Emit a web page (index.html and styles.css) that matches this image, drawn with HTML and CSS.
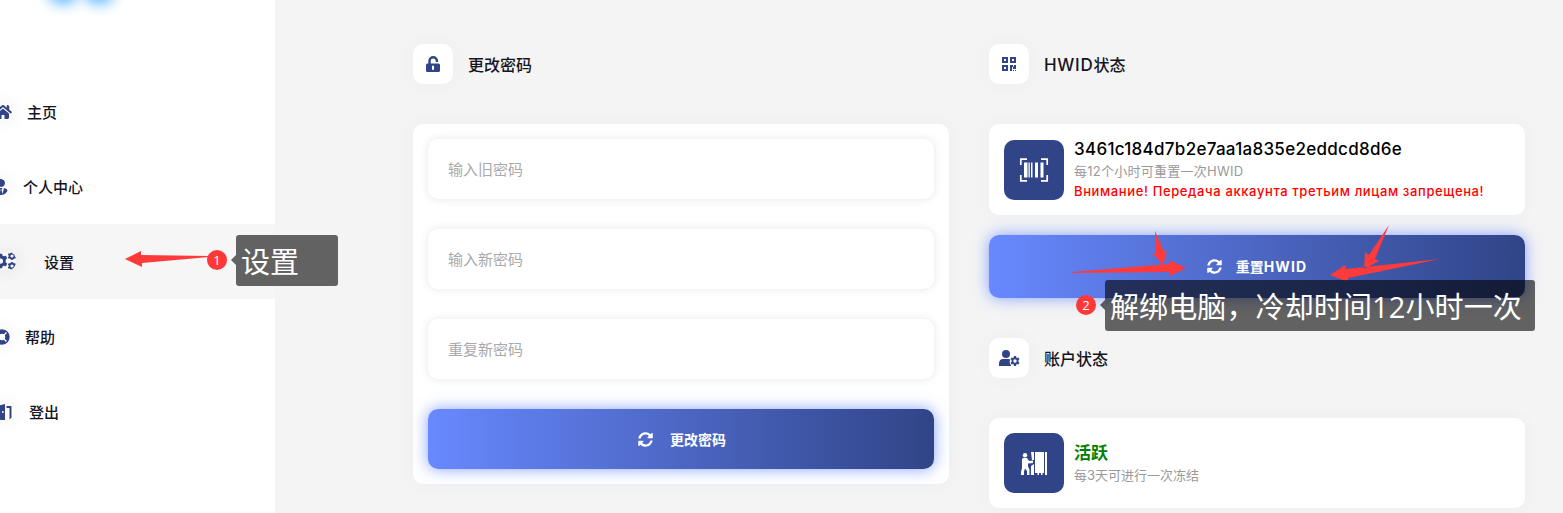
FILE: index.html
```html
<!DOCTYPE html>
<html lang="zh-CN">
<head>
<meta charset="utf-8">
<title>设置</title>
<link rel="stylesheet" href="styles.css">
</head>
<body>
<svg class="defs" aria-hidden="true">
  <symbol id="sync" viewBox="0 0 512 512"><path d="M370.72 133.28C339.458 104.008 298.888 87.962 255.848 88c-77.458.068-144.328 53.178-162.791 126.85-1.344 5.363-6.122 9.15-11.651 9.15H24.103c-7.498 0-13.194-6.807-11.807-14.176C33.933 94.924 134.813 8 256 8c66.448 0 126.791 26.136 171.315 68.685L463.03 40.97C478.149 25.851 504 36.559 504 57.941V192c0 13.255-10.745 24-24 24H345.941c-21.382 0-32.09-25.851-16.971-40.971l41.75-41.749zM32 296h134.059c21.382 0 32.09 25.851 16.971 40.971l-41.75 41.75c31.262 29.273 71.835 45.319 114.876 45.28 77.418-.07 144.315-53.144 162.787-126.849 1.344-5.363 6.122-9.15 11.651-9.15h57.304c7.498 0 13.194 6.807 11.807 14.176C478.067 417.076 377.187 504 256 504c-66.448 0-126.791-26.136-171.315-68.685L48.97 471.03C33.851 486.149 8 475.441 8 454.059V320c0-13.255 10.745-24 24-24z"/></symbol>
  <symbol id="gear" viewBox="0 0 20 20"><path fill-rule="evenodd" d="M8 0h4l.6 2.800 1.700 1 2.700-.9 2 3.400-2.100 1.900v3.600l2.100 1.900-2 3.400-2.700-.9-1.700 1L12 20H8l-.6-2.800-1.700-1-2.700.9-2-3.400 2.100-1.900V8.200L1 6.300l2-3.400 2.700.9 1.700-1zM10 6.500a3.500 3.500 0 1 0 0 7 3.500 3.500 0 0 0 0-7z"/></symbol>
</svg>
<div class="page">
  <nav class="sidebar">
    <div class="logo"><i></i><i></i></div>
    <a class="item"><svg class="icon" width="18" height="16" viewBox="0 0 576 512"><path d="M280.37 148.26L96 300.11V464a16 16 0 0 0 16 16l112.06-.29a16 16 0 0 0 15.92-16V368a16 16 0 0 1 16-16h64a16 16 0 0 1 16 16v95.64a16 16 0 0 0 16 16.05L464 480a16 16 0 0 0 16-16V300L295.67 148.26a12.19 12.19 0 0 0-15.3 0zM571.6 251.47L488 182.56V44.05a12 12 0 0 0-12-12h-56a12 12 0 0 0-12 12v72.61L318.47 43a48 48 0 0 0-61 0L4.340 251.470a12 12 0 0 0-1.600 16.900l25.500 31A12 12 0 0 0 45.150 301l235.220-193.740a12.190 12.190 0 0 1 15.300 0L530.900 301a12 12 0 0 0 16.900-1.600l25.500-31a12 12 0 0 0-1.700-16.930z"/></svg><span>主页</span></a>
    <a class="item"><svg class="icon" width="14" height="16" viewBox="0 0 448 512"><path d="M224 256c70.7 0 128-57.3 128-128S294.700 0 224 0 96 57.300 96 128s57.300 128 128 128zm95.800 32.600L272 480l-32-136 32-56h-96l32 56-32 136-47.800-191.400C56.900 292 0 350.300 0 422.400V464c0 26.500 21.500 48 48 48h352c26.500 0 48-21.500 48-48v-41.600c0-72.100-56.900-130.400-128.200-133.800z"/></svg><span>个人中心</span></a>
    <a class="item active"><svg class="icon" width="22" height="18" viewBox="0 0 22 18"><use href="#gear" x="-1" y="1.500" width="15" height="15"/><g fill="none" stroke="#304487"><circle cx="18" cy="4" r="2.500" stroke-width="1.800"/><circle cx="18" cy="14" r="2.500" stroke-width="1.800"/><path stroke-width="1.500" d="M18 0v1.500M18 6.500V8M14.200 2l1.500.8M20.300 5.200l1.500.8M21.800 2l-1.500.8M15.700 5.200l-1.500.8M18 10v1.500M18 16.500V18M14.200 12l1.500.8M20.300 15.200l1.500.8M21.800 12l-1.500.8M15.700 15.200l-1.500.8"/></g></svg><span>设置</span></a>
    <a class="item"><svg class="icon" width="16" height="16" viewBox="0 0 16 16"><circle cx="8" cy="8" r="5.500" fill="none" stroke="#304487" stroke-width="4.600"/><path d="M3.500 3.500l2.500 2.500M12.500 3.500l-2.500 2.500M3.500 12.500l2.500-2.500M12.500 12.500l-2.500-2.500" stroke="#fff" stroke-width="1.400"/></svg><span>帮助</span></a>
    <a class="item"><svg class="icon" width="20" height="16" viewBox="0 0 20 16"><path fill-rule="evenodd" d="M3 2l8-2v16H0v-2h3zM8.200 7v2h1.300V7zM12.500 2h5v12H20v2h-4.500V4h-3z"/></svg><span>登出</span></a>
  </nav>
  <main class="content">
    <section class="column">
      <header class="heading"><div class="badge"><svg width="14" height="16" viewBox="0 0 14 16"><path d="M3.500 8V4.800a3.700 3.600 0 0 1 7.400 0V6" fill="none" stroke="#304487" stroke-width="2.400"/><path fill-rule="evenodd" d="M1.500 7.500h11Q14 7.500 14 9v5.500q0 1.500-1.500 1.500h-11Q0 16 0 14.500V9Q0 7.500 1.500 7.500zM6 9.800v4h2v-4z"/></svg></div><h2>更改密码</h2></header>
      <form class="card form">
        <input placeholder="输入旧密码"><input placeholder="输入新密码"><input placeholder="重复新密码">
        <button class="button" type="button"><svg width="15" height="15"><use href="#sync"/></svg><span>更改密码</span></button>
      </form>
    </section>
    <section class="column">
      <header class="heading"><div class="badge"><svg width="14" height="14" viewBox="0 0 14 14"><path fill-rule="evenodd" d="M0 0h6v6H0zM2 2v2h2V2zM8 0h6v6H8zM10 2v2h2V2zM0 8h6v6H0zM2 10v2h2v-2zM8 8h3v1.500h1V8h2v4h-3v-2h-1v4H8zM11 13h1v1h-1zM13 13h1v1h-1z"/></svg></div><h2><span class="latin">HWID</span>状态</h2></header>
      <div class="card info hwid"><div class="tile"><svg width="30" height="24" viewBox="0 0 30 24"><path d="M1.800 7V1.200H8M22 1.200h6.200V7M1.800 17v5.800H8M22 22.800h6.200V17" fill="none" stroke="#fff" stroke-width="1.700"/><path d="M5 4.500h3.500v15H5zM9.500 4.500h1.300v15H9.500zM12 4.500h1.500v15H12zM16 4.500h3v15h-3zM21.500 4.500h3v15h-3z"/></svg></div><div class="details"><strong class="id">3461c184d7b2e7aa1a835e2eddcd8d6e</strong><small class="cooldown">每12个小时可重置一次HWID</small><small class="warn">Внимание! Передача аккаунта третьим лицам запрещена!</small></div></div>
      <button class="button reset" type="button"><svg width="15" height="15"><use href="#sync"/></svg><span>重置<span class="latin">HWID</span></span></button>
      <header class="heading"><div class="badge"><svg width="21" height="16" viewBox="0 0 21 16"><circle cx="7" cy="4" r="4"/><path d="M0 16v-2.200Q0 9 4.200 9h5.600l1.500.5Q9.700 12 12 15.200V16z"/><use href="#gear" x="11" y="6" width="10" height="10"/></svg></div><h2>账户状态</h2></header>
      <div class="card info"><div class="tile"><svg width="26" height="23" viewBox="0 0 26 23"><circle cx="4" cy="3.200" r="2.200"/><path d="M2 6h4l2 3 4-.5V11l-5 .5v3l1.500 3V23H6v-4l-2-2.500-1 3V23H0v-3l1-4V7zM10 0h3v8h-2zM10 14l3-2v11h-3zM14 0h9v21h-1.500v2H20v-2h-2v2h-1.500v-2H14zM24 0h2v23h-2z"/></svg></div><div class="details"><strong class="status">活跃</strong><small>每3天可进行一次冻结</small></div></div>
    </section>
  </main>
</div>
<svg class="arrows" width="1563" height="513" viewBox="0 0 1563 513"><path d="M125 259l16-8v4l68 1v1l-67 6v4zM1072 272l97-8v-4l17 8-16 8v-4l-98 1zM1155 231l9 21 3-1-4 14-10-11 3-1zM1389 225l-20 30-4-3-1 17 15-8-4-2zM1330 275l15-10 1 4 94-10-92 19v4z"/></svg>
<div class="step one">1</div><div class="note note-one">设置</div>
<div class="step two">2</div><div class="note note-two">解绑电脑，冷却时间12小时一次</div>
</body>
</html>
```
FILE: styles.css
```css
* { box-sizing: border-box; }
body { margin: 0; overflow: hidden; background: #f4f4f4; color: #15151f; font-family: Inter, "Noto Sans CJK SC", sans-serif; }
.defs { position: absolute; width: 0; height: 0; }
svg { flex: none; fill: #304487; }
.page { display: flex; width: 1563px; height: 513px; }
.sidebar { width: 275px; flex: none; background: #fff; overflow: hidden; }
.logo { height: 74px; display: flex; gap: 14px; padding-left: 52px; }
.logo i { width: 22px; height: 16px; margin-top: -19px; border-radius: 50%; box-shadow: 0 3px 14px 4px #5cb6ff; }
.item { height: 75px; margin-left: -6px; display: flex; align-items: center; gap: 15px; font-size: 15px; font-weight: 500; }
.item.active { background: #f6f6f6; gap: 28px; }
.item.active .icon { margin-top: -2px; }
.icon { border-radius: 8px; box-shadow: 0 0 16px 3px rgba(0,0,0,.05); }
.content { display: flex; gap: 40px; padding: 44px 38px 0 138px; align-items: flex-start; }
.column { width: 536px; }
.heading { display: flex; align-items: center; gap: 15px; height: 40px; margin-bottom: 40px; }
.badge { width: 40px; height: 40px; display: flex; align-items: center; justify-content: center; border-radius: 10px; background: #fff; box-shadow: 0 0 20px rgba(0,0,0,.03); }
h2 { margin: 1px 0 0; font-size: 16px; font-weight: 500; line-height: 24px; }
.latin { letter-spacing: .5px; }
h2 .latin { font-size: 17px; letter-spacing: .7px; }
.card { background: #fff; border-radius: 10px; padding: 15px; box-shadow: 0 0 20px rgba(0,0,0,.03); }
.form { display: flex; flex-direction: column; gap: 30px; }
input { height: 60px; border: 0; border-radius: 10px; padding: 0 20px 2px; background: #fff; box-shadow: 0 0 10px rgba(0,0,0,.1); font: 400 15px "Noto Sans CJK SC", sans-serif; }
input::placeholder { color: #aaa; }
.button { display: flex; align-items: center; justify-content: center; gap: 17px; width: 100%; height: 60px; padding: 0 0 0 2px; border: 0; border-radius: 10px; background: linear-gradient(90deg, #6889ff, #304487); box-shadow: 0 0 15px rgba(104,137,255,.8); color: #fff; font: 700 14px Inter, "Noto Sans CJK SC", sans-serif; }
.button svg, .tile svg { fill: #fff; }
.reset { height: 63px; margin: 20px 0 40px; padding: 0 0 1px; gap: 14px; }
.reset .latin { letter-spacing: 1.1px; }
.info { display: flex; align-items: center; gap: 10px; height: 90px; }
.hwid { height: 91px; }
.tile { width: 60px; height: 60px; flex: none; display: flex; align-items: center; justify-content: center; border-radius: 10px; background: #304487; }
.details { display: flex; flex-direction: column; white-space: nowrap; }
strong { font-size: 17px; line-height: 24px; }
.id { color: #000; font-weight: 500; letter-spacing: .29px; line-height: 21px; }
.status { color: #008000; font-weight: 700; }
small { color: #999; font-size: 13px; line-height: 21px; }
.cooldown { line-height: 22px; letter-spacing: .25px; }
.warn { color: red; line-height: 18px; font-weight: 500; letter-spacing: .62px; }
.arrows { position: absolute; left: 0; top: 0; fill: #ff3a3a; }
.step { position: absolute; width: 20px; height: 20px; border-radius: 50%; background: #ff3838; color: #fff; font: 13px/20px "Open Sans", sans-serif; text-align: center; }
.one { left: 207px; top: 250px; }
.two { left: 1076px; top: 295px; }
.note { position: absolute; height: 51px; padding-left: 5px; border-radius: 3px; background: rgba(0,0,0,.6); color: #fff; font: 400 29px/53px "Open Sans", "Noto Sans CJK SC", sans-serif; letter-spacing: .12px; white-space: nowrap; }
.note::before { content: ""; position: absolute; right: 100%; top: 20px; border: solid transparent; border-width: 5px 5px 5px 0; border-right-color: rgba(0,0,0,.6); }
.note-one { left: 236px; top: 235px; width: 102px; }
.note-two { left: 1105px; top: 280px; width: 430px; }
```
